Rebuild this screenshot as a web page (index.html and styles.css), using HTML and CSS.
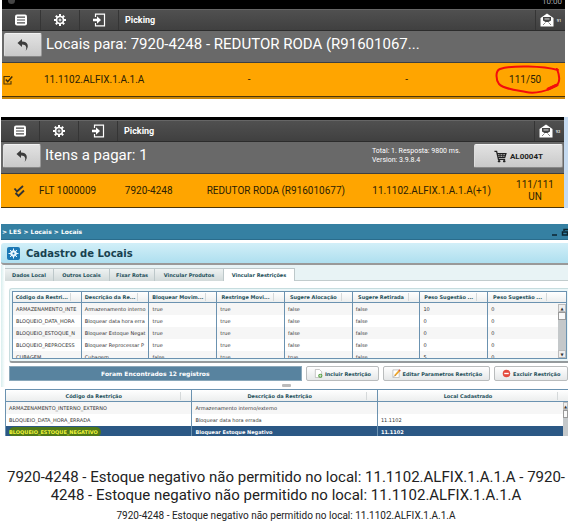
FILE: index.html
```html
<!DOCTYPE html>
<html lang="pt-BR">
<head>
<meta charset="utf-8">
<title>Picking e Cadastro de Locais</title>
<link rel="stylesheet" href="styles.css">
</head>
<body>
<svg class="defs" aria-hidden="true">
  <symbol id="i-menu" viewBox="0 0 14 14"><rect x="1" y="1.5" width="12" height="11" rx="2" fill="#fff"/><path d="M3 4.2h8M3 7h8M3 9.8h8" stroke="#484848" stroke-width="1.2"/></symbol>
  <symbol id="i-gear" viewBox="0 0 14 14"><g stroke="#fff" fill="none"><circle cx="7" cy="7" r="3.5" stroke-width="1.7"/><circle cx="7" cy="7" r="1" stroke-width="1"/><path d="M7 1v2.2M7 10.8V13M1 7h2.2M10.8 7H13M2.8 2.8l1.5 1.5M9.7 9.7l1.5 1.5M11.2 2.8L9.7 4.3M4.3 9.7l-1.5 1.5" stroke-width="2"/></g></symbol>
  <symbol id="i-exit" viewBox="0 0 14 14"><path d="M3.5 4V1.2h9v11.6h-9V10" fill="none" stroke="#fff" stroke-width="1.2"/><path d="M1 5.8h4V3.2L9 7l-4 3.8V8.2H1z" fill="#fff"/></symbol>
  <symbol id="i-mail" viewBox="0 0 14 14"><path d="M.5 5L7 .5 13.500 5v8.500H.5z" fill="#fff"/><path d="M3 4h8v3.500L8.500 9h-3L3 7.500z" fill="#444"/><path d="M4.500 5.200h5v1.500h-5z" fill="#aaa"/><path d="M3 12l2.500-2.500M11 12L8.500 9.500" stroke="#555" stroke-width=".7"/></symbol>
  <symbol id="i-back" viewBox="0 0 14 14"><path d="M1.500 5L6 1v2.600c5.500-.2 8 5 3.600 9.400C11.200 9.500 10 6.500 6 6.600V9z" fill="#3c3c3c"/></symbol>
  <symbol id="i-check" viewBox="0 0 10 10"><path d="M7 1.500H1v7.500h7V6" fill="none" stroke="#4b3508" stroke-width="1.100"/><path d="M2.800 4.500L4.700 6.700 9.300 1.500" fill="none" stroke="#3b2a08" stroke-width="1.500"/></symbol>
  <symbol id="i-double" viewBox="0 0 12 14"><path d="M1.500 4.500l2.500 3L10 2M2.500 9l3 3L11 6.500" fill="none" stroke="#333" stroke-width="1.900"/></symbol>
  <symbol id="i-cart" viewBox="0 0 14 14"><path d="M.5 1.500h2.300l2 8.500H12M3.300 4h9.500l-1.200 4H4.300" fill="none" stroke="#222" stroke-width="1.400"/><path d="M4 5.800h8.200M6.500 4v4M9.500 4v4" stroke="#222"/><circle cx="5.500" cy="12" r="1.300" fill="#222"/><circle cx="11" cy="12" r="1.300" fill="#222"/></symbol>
</svg>

<section class="device device-first">
  <div class="status"><span class="dot"></span><span class="clock">10:00</span></div>
  <nav class="toolbar">
    <button class="tool" aria-label="Menu"><svg><use href="#i-menu"/></svg></button>
    <button class="tool" aria-label="Configurações"><svg><use href="#i-gear"/></svg></button>
    <button class="tool" aria-label="Sair"><svg><use href="#i-exit"/></svg></button>
    <span class="name">Picking</span>
    <button class="tool mail" aria-label="Mensagens"><svg><use href="#i-mail"/></svg><small>91</small></button>
  </nav>
  <header class="titlebar">
    <button class="key back" aria-label="Voltar"><svg><use href="#i-back"/></svg></button>
    <h1>Locais para: 7920-4248 - REDUTOR RODA (R91601067...</h1>
  </header>
  <div class="item place">
    <svg class="tick"><use href="#i-check"/></svg>
    <span>11.1102.ALFIX.1.A.1.A</span><span class="mid">-</span><span class="mid">-</span>
    <span class="qty">111/50
      <svg class="ring" viewBox="0 0 66 30"><path d="M63 5C48 1 18 0 5 4C0 6 1 15 4 19C9 24 20 25 31 27C40 29 53 26 61 21C66 17 64 9 62 4M61 20l-8 4" fill="none" stroke="#f30c0c" stroke-width="2" stroke-linecap="round"/><path d="M53 24l9-4" stroke="#f30c0c" stroke-width="3" stroke-linecap="round"/></svg>
    </span>
  </div>
  <div class="next"></div>
</section>

<section class="device device-second">
  <div class="status"></div>
  <nav class="toolbar">
    <button class="tool" aria-label="Menu"><svg><use href="#i-menu"/></svg></button>
    <button class="tool" aria-label="Configurações"><svg><use href="#i-gear"/></svg></button>
    <button class="tool" aria-label="Sair"><svg><use href="#i-exit"/></svg></button>
    <span class="name">Picking</span>
    <button class="tool mail" aria-label="Mensagens"><svg><use href="#i-mail"/></svg><small>92</small></button>
  </nav>
  <header class="titlebar">
    <button class="key back" aria-label="Voltar"><svg><use href="#i-back"/></svg></button>
    <h1>Itens a pagar: 1</h1>
    <p class="info">Total: 1. Resposta: 9800 ms.<br>Version: 3.9.8.4</p>
    <button class="key cart"><svg><use href="#i-cart"/></svg>AL0004T</button>
  </header>
  <div class="item order">
    <svg class="tick"><use href="#i-double"/></svg>
    <span>FLT 1000009</span><span>7920-4248</span><span>REDUTOR RODA (R916010677)</span><span>11.1102.ALFIX.1.A.1.A(+1)</span>
    <span class="qty">111/111<br>UN</span>
  </div>
</section>

<section class="web">
  <div class="crumbs"><span>&gt; LES &gt; Locais &gt; Locais</span>
    <svg class="winctl" viewBox="0 0 16 8"><path d="M0 7h5" stroke="#0c2530" stroke-width="1.500"/><path d="M12 3V1.500h5M10.500 4h5v3h-5z" fill="none" stroke="#0c2530" stroke-width="1.500"/></svg>
  </div>
  <header class="pagehead">
    <svg viewBox="0 0 13 13"><rect width="13" height="13" rx="2" fill="#1b78b5"/><g stroke="#e8f6ff" fill="none"><circle cx="6.500" cy="6.500" r="2.500" stroke-width="1.500"/><path d="M6.500 1.500v10M1.500 6.500h10M3 3l7 7M10 3l-7 7" stroke-width="1"/></g><circle cx="6.500" cy="6.500" r="1" fill="#1b78b5"/></svg>
    <h2>Cadastro de Locais</h2>
  </header>
  <div class="frame">
    <nav class="tabs">
      <button>Dados Local</button><button>Outros Locais</button><button>Fixar Rotas</button><button>Vincular Produtos</button><button class="on">Vincular Restrições</button>
    </nav>
    <div class="panel">
      <div class="gridbox">
        <table class="grid upper">
          <thead><tr><th>Código da Restri...</th><th>Descrição da Re...</th><th>Bloquear Movim...</th><th>Restringe Movi...</th><th>Sugere Alocação</th><th>Sugere Retirada</th><th>Peso Sugestão ...</th><th>Peso Sugestão ...</th></tr></thead>
          <tbody>
            <tr><td>ARMAZENAMENTO_INTE</td><td>Armazenamento interno</td><td>true</td><td>true</td><td>false</td><td>false</td><td>10</td><td>0</td></tr>
            <tr><td>BLOQUEIO_DATA_HORA</td><td>Bloquear data hora erra</td><td>true</td><td>true</td><td>false</td><td>false</td><td>0</td><td>0</td></tr>
            <tr><td>BLOQUEIO_ESTOQUE_N</td><td>Bloquear Estoque Negat</td><td>true</td><td>true</td><td>false</td><td>false</td><td>0</td><td>0</td></tr>
            <tr><td>BLOQUEIO_REPROCESS</td><td>Bloquear Reprocessar P</td><td>true</td><td>true</td><td>false</td><td>false</td><td>0</td><td>0</td></tr>
            <tr><td>CUBAGEM</td><td>Cubagem</td><td>false</td><td>true</td><td>true</td><td>false</td><td>5</td><td>0</td></tr>
          </tbody>
        </table>
        <div class="scroll"><i>▲</i><b></b><i class="end">▼</i></div>
      </div>
    </div>
    <div class="actions">
      <strong>Foram Encontrados 12 registros</strong>
      <button><svg viewBox="0 0 10 10"><path d="M1.500.5h4.500l2.500 2.500v6.500h-7z" fill="#fff" stroke="#aaa" stroke-width=".7"/><circle cx="7" cy="7.500" r="2.300" fill="#4b9a35"/><path d="M7 6v3M5.500 7.500h3" stroke="#fff" stroke-width=".7"/></svg>Incluir Restrição</button>
      <button><svg viewBox="0 0 10 10"><path d="M1 1h7v8.500H1z" fill="#fff" stroke="#aaa" stroke-width=".7"/><path d="M3 7.500L8.500 1.500" stroke="#eda52c" stroke-width="2"/><path d="M8 2l1-1" stroke="#d9534f" stroke-width="2"/><path d="M2.300 8.300l1-1" stroke="#555"/></svg>Editar Parametros Restrição</button>
      <button><svg viewBox="0 0 10 10"><circle cx="5" cy="5" r="4.200" fill="#e44b3e"/><path d="M2.500 5h5" stroke="#fff" stroke-width="1.500"/></svg>Excluir Restrição</button>
    </div>
    <div class="split"></div>
  </div>
  <div class="lowerbox">
    <table class="grid lower">
      <thead><tr><th>Código da Restrição</th><th>Descrição da Restrição</th><th>Local Cadastrado</th></tr></thead>
      <tbody>
        <tr><td>ARMAZENAMENTO_INTERNO_EXTERNO</td><td>Armazenamento interno/externo</td><td></td></tr>
        <tr><td>BLOQUEIO_DATA_HORA_ERRADA</td><td>Bloquear data hora errada</td><td>11.1102</td></tr>
        <tr class="sel"><td><mark>BLOQUEIO_ESTOQUE_NEGATIVO</mark></td><td>Bloquear Estoque Negativo</td><td>11.1102</td></tr>
      </tbody>
    </table>
    <div class="scroll"><i>▲</i><b></b></div>
  </div>
</section>

<footer class="messages">
  <p>7920-4248 - Estoque negativo não permitido no local: 11.1102.ALFIX.1.A.1.A - 7920-<wbr>4248 - Estoque negativo não permitido no local: 11.1102.ALFIX.1.A.1.A</p>
  <p class="small">7920-4248 - Estoque negativo não permitido no local: 11.1102.ALFIX.1.A.1.A</p>
</footer>
</body>
</html>
```
FILE: styles.css
```css
* { box-sizing: border-box; }
body { margin: 0; background: #fff; font-family: Roboto, sans-serif; color: #222; overflow: hidden; }
button { font: inherit; color: inherit; margin: 0; padding: 0; border: 0; background: none; }
h1, h2, p { margin: 0; font-weight: 400; }
.defs { position: absolute; width: 0; height: 0; }

/* Handheld screens */
.device { margin: 0 3px 0 2px; }
.device-second { margin: 18px 4px 0 1px; box-shadow: 4px 0 #c5daf0; }
.status { background: #000; height: 3px; display: flex; justify-content: space-between; }
.device-first .status { height: 9px; overflow: hidden; }
.dot { width: 7px; height: 7px; margin: -3px 0 0 6px; border-radius: 50%; background: #444; }
.clock { font-size: 8px; line-height: 8px; margin: -2px 3px 0 0; color: #aaa; }
.toolbar { display: flex; align-items: stretch; height: 22px; background: linear-gradient(#505050, #404040); border-top: 1px solid #666; border-bottom: 1px solid #2c2c2c; }
.tool { width: 39px; border-right: 1px solid #353535; display: flex; align-items: center; justify-content: center; }
.tool svg { width: 14px; height: 14px; }
.name { flex: 1; padding-left: 6px; font-size: 9px; line-height: 20px; font-weight: 700; color: #fff; }
.mail { width: 30px; gap: 3px; border-left: 1px solid #353535; border-right: 0; color: #ddd; }
.mail small { font-size: 4px; font-weight: 700; }
.titlebar { display: flex; background: #696969; height: 32px; padding: 2px 1px 0 2px; border-bottom: 1px solid #3f3f3f; }
.titlebar h1 { flex: 1; padding-left: 4px; font-size: 15px; line-height: 22px; color: #fff; white-space: nowrap; }
.key { height: 24px; border: 1px solid #eee; border-color: #f2f2f2 #999 #888 #ddd; border-radius: 2px; background: linear-gradient(#e2e2e2, #c9c9c9); display: flex; align-items: center; justify-content: center; }
.back { width: 38px; }
.back svg { width: 14px; height: 14px; }
.info { width: 102px; font-size: 7px; line-height: 9px; padding-top: 3px; color: #fff; white-space: nowrap; }
.cart { width: 89px; gap: 3px; font-size: 8px; font-weight: 700; }
.cart svg { width: 13px; height: 13px; }
.item { display: grid; align-items: center; height: 34px; background: #ffa500; border-bottom: 1px solid #4d3508; font-size: 10px; line-height: 12px; white-space: nowrap; color: #2b1e05; }
.place { grid-template-columns: 42px 127fr 158fr 158fr 80fr; }
.place .tick { width: 10px; height: 10px; margin-left: 1px; }
.mid { text-align: center; }
.qty { text-align: center; position: relative; }
.ring { position: absolute; width: 66px; height: 30px; left: 50%; top: 50%; margin: -15px 0 0 -30px; }
.next { height: 2px; background: #c98508; }
.order { grid-template-columns: 38px 86fr 82fr 166fr 134fr 58fr; }
.order .tick { width: 12px; height: 14px; margin-left: 12px; }

/* Registry window */
.web { margin-top: 16px; margin-left: 1px; font-family: "DejaVu Sans", sans-serif; font-size: 5px; color: #333; overflow: hidden; }
.crumbs { height: 16px; background: #3580a2; color: #fff; font-size: 6px; line-height: 16px; font-weight: 700; padding: 0 0 0 1px; display: flex; justify-content: space-between; align-items: center; border-bottom: 1px solid #2a6c8c; }
.winctl { width: 16px; height: 8px; }
.pagehead { margin-top: 3px; height: 22px; display: flex; align-items: center; gap: 6px; padding-left: 6px; background: linear-gradient(#d2eff8, #aedfef); border-bottom: 2px solid #999; border-radius: 3px 0 0 3px; }
.pagehead svg { width: 13px; height: 13px; }
.pagehead h2 { font-size: 10px; font-weight: 700; color: #17414f; }
.frame { background: linear-gradient(90deg, #d8eeee, #fff 4px); padding-left: 4px; }
.tabs { display: grid; grid-template-columns: 49px 56px 45px 69px 71px; padding-top: 3px; height: 16px; background: #e8f3f5; border-bottom: 1px solid #c2cccd; }
.tabs button { background: linear-gradient(#eef2f2, #d2dada); border: 1px solid #bdc8ca; border-width: 1px 1px 0 0; font-weight: 700; color: #24505a; line-height: 11px; white-space: nowrap; }
.tabs .on { background: #fff; height: 13px; }
.panel { margin: 7px 0 0 4px; padding: 2px 1px 2px 2px; border: 1px solid #c7dddf; border-width: 1px 0 0 1px; border-bottom: 2px solid #949a9c; background: #eaf6f8; border-radius: 3px 0 0 3px; }
.gridbox, .lowerbox { position: relative; overflow: hidden; border: 1px solid #6b92b0; background: #fff; }
.gridbox { height: 68px; }
.grid { width: 100%; border-collapse: separate; border-spacing: 0; table-layout: fixed; }
.grid th, .grid td { height: 12px; padding: 0 0 0 3px; text-align: left; line-height: 11px; overflow: hidden; white-space: nowrap; border-left: 1px solid #6b92b0; }
.grid th:first-child, .grid td:first-child { border-left: 0; }
.grid th { padding: 0 11px 0 1px; text-align: center; line-height: 10px; background: linear-gradient(#d5d9da, #d5d9da) right 10px center / 1px 8px no-repeat, linear-gradient(#fff, #eceeee); border-bottom: 1px solid #6b92b0; color: #24505a; }
.grid tbody tr:nth-child(odd) { background: #f6f6f6; }
.upper th { height: 11px; width: 12.25%; }
.upper th:last-child { width: auto; padding-right: 20px; background-position: right 19px center, 0 0; }
.scroll { position: absolute; top: 12px; right: 0; bottom: 0; width: 8px; display: flex; flex-direction: column; background: #c4c8ca; font-size: 4px; }
.scroll i { height: 8px; line-height: 7px; text-align: center; font-style: normal; background: #eee; border: 1px solid #bbb; }
.scroll b { height: 8px; background: #f8f8f8; border: 1px solid #999; }
.scroll .end { margin-top: auto; }
.actions { margin: 3px 0 0 4px; display: flex; gap: 4px; height: 15px; font-weight: 700; color: #24505a; }
.actions strong { flex: 296; background: #58839f; color: #fff; text-align: center; line-height: 14px; font-size: 6px; border: 1px solid #8aa8ba; }
.actions button { flex: 73; display: flex; align-items: center; justify-content: center; gap: 2px; white-space: nowrap; border: 1px solid #b9bcbd; border-radius: 2px; background: linear-gradient(#fff, #e5e7e8); }
.actions button:nth-of-type(2) { flex: 107; }
.actions svg { width: 9px; height: 9px; }
.split { width: 9px; height: 3px; margin: 3px auto 2px; background: #bbb; border-radius: 1px; }
.lowerbox { margin-left: 4px; height: 47px; border-width: 1px 0 0 1px; }
.lower th:nth-child(-n+2) { width: 33%; }
.grid tbody tr.sel { background: #2b5885; color: #fff; font-weight: 700; }
.lower .sel td { height: 11px; line-height: 10px; }
.lower mark { background: #4f7818; color: #f0f43a; border-radius: 5px; padding: 2px 3px 2px 0; }
.lowerbox .scroll { width: 5px; }

.messages { padding: 32px 0 0 4px; text-align: center; font-size: 15px; line-height: 18px; }
.messages .small { font-size: 10px; line-height: 12px; margin-top: 6px; }
```
